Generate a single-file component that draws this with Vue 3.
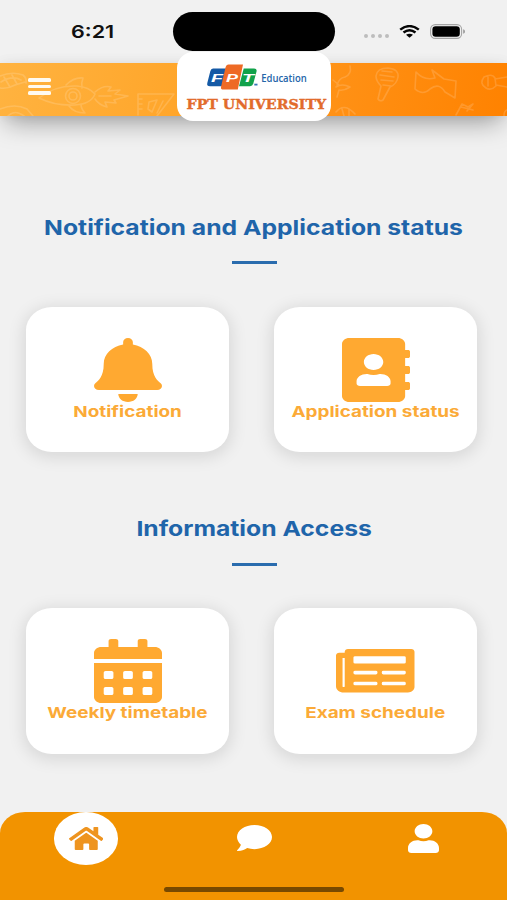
<script setup>
import { ref } from 'vue'

const activeTab = ref('home')

const icons = {
  bell: {
    box: '0 0 448 512',
    d: 'M224 512c35.32 0 63.97-28.65 63.97-64H160.03c0 35.35 28.65 64 63.97 64zm215.39-149.71c-19.32-20.76-55.47-51.99-55.47-154.29 0-77.7-54.48-139.9-127.94-155.16V32c0-17.67-14.32-32-31.98-32s-31.98 14.33-31.98 32v20.84C118.56 68.1 64.08 130.3 64.08 208c0 102.3-36.15 133.53-55.47 154.29-6 6.45-8.66 14.16-8.61 21.71.11 16.4 12.98 32 32.1 32h383.8c19.12 0 32-15.6 32.1-32 .05-7.55-2.61-15.27-8.61-21.71z'
  },
  book: {
    box: '0 0 448 512',
    d: 'M436 160c6.6 0 12-5.4 12-12v-40c0-6.6-5.4-12-12-12h-20V48c0-26.5-21.5-48-48-48H48C21.5 0 0 21.5 0 48v416c0 26.5 21.5 48 48 48h320c26.5 0 48-21.5 48-48v-48h20c6.6 0 12-5.4 12-12v-40c0-6.6-5.4-12-12-12h-20v-64h20c6.6 0 12-5.4 12-12v-40c0-6.6-5.4-12-12-12h-20v-64h20zm-228-32c35.3 0 64 28.7 64 64s-28.7 64-64 64-64-28.7-64-64 28.7-64 64-64zm112 236.8c0 10.6-10 19.2-22.4 19.2H118.4C106 384 96 375.4 96 364.8v-19.2c0-31.8 30.1-57.6 67.2-57.6h5c12.3 5.1 25.7 8 39.8 8s27.6-2.9 39.8-8h5c37.1 0 67.2 25.8 67.2 57.6v19.2z'
  },
  calendar: {
    box: '0 0 448 512',
    d: 'M0 464c0 26.5 21.5 48 48 48h352c26.5 0 48-21.5 48-48V192H0v272zM76 256h40q12 0 12 12v40q0 12-12 12H76q-12 0-12-12v-40q0-12 12-12zm128 0h40q12 0 12 12v40q0 12-12 12h-40q-12 0-12-12v-40q0-12 12-12zm128 0h40q12 0 12 12v40q0 12-12 12h-40q-12 0-12-12v-40q0-12 12-12zM76 384h40q12 0 12 12v40q0 12-12 12H76q-12 0-12-12v-40q0-12 12-12zm128 0h40q12 0 12 12v40q0 12-12 12h-40q-12 0-12-12v-40q0-12 12-12zm128 0h40q12 0 12 12v40q0 12-12 12h-40q-12 0-12-12v-40q0-12 12-12zM400 64h-48V16c0-8.8-7.2-16-16-16h-32c-8.8 0-16 7.2-16 16v48H160V16c0-8.8-7.2-16-16-16h-32c-8.8 0-16 7.2-16 16v48H48C21.5 64 0 85.5 0 112v48h448v-48c0-26.5-21.5-48-48-48z'
  },
  newspaper: {
    box: '0 64 576 384',
    d: 'M552 64H88c-13.255 0-24 10.745-24 24v8H24c-13.255 0-24 10.745-24 24v272c0 30.928 25.072 56 56 56h472c26.51 0 48-21.49 48-48V88c0-13.255-10.745-24-24-24zM56 400a8 8 0 0 1-8-8V144h16v248a8 8 0 0 1-8 8zm236-16H140q-12 0-12-12v-8q0-12 12-12h152q12 0 12 12v8q0 12-12 12zm208 0H348q-12 0-12-12v-8q0-12 12-12h152q12 0 12 12v8q0 12-12 12zm-208-96H140q-12 0-12-12v-8q0-12 12-12h152q12 0 12 12v8q0 12-12 12zm208 0H348q-12 0-12-12v-8q0-12 12-12h152q12 0 12 12v8q0 12-12 12zm0-96H140q-12 0-12-12v-40q0-12 12-12h360q12 0 12 12v40q0 12-12 12z'
  },
  home: {
    box: '0 32 576 448',
    d: 'M280.37 148.26L96 300.11V464a16 16 0 0 0 16 16l112.06-.29a16 16 0 0 0 15.92-16V368a16 16 0 0 1 16-16h64a16 16 0 0 1 16 16v95.64a16 16 0 0 0 16 16.05L464 480a16 16 0 0 0 16-16V300L295.67 148.26a12.19 12.19 0 0 0-15.3 0zM571.6 251.47L488 182.56V44.05a12 12 0 0 0-12-12h-56a12 12 0 0 0-12 12v72.61L318.47 43a48 48 0 0 0-61 0L4.34 251.47a12 12 0 0 0-1.6 16.91l25.5 31A12 12 0 0 0 45.15 301l235.22-193.74a12.19 12.19 0 0 1 15.3 0L530.9 301a12 12 0 0 0 16.9-1.6l25.5-31a12 12 0 0 0-1.7-16.93z'
  },
  chat: {
    box: '0 32 512 448',
    d: 'M256 32C114.6 32 0 125.1 0 240c0 49.6 21.4 95 57 130.7C44.5 421.1 2.7 466 2.2 466.5c-2.2 2.3-2.8 5.7-1.5 8.7S4.8 480 8 480c66.3 0 116-31.8 140.6-51.4 32.7 12.3 69 19.4 107.4 19.4 141.4 0 256-93.1 256-208S397.4 32 256 32z'
  },
  user: {
    box: '0 0 448 512',
    d: 'M224 256c70.7 0 128-57.3 128-128S294.7 0 224 0 96 57.3 96 128s57.3 128 128 128zm89.6 32h-16.7c-22.2 10.2-46.9 16-72.9 16s-50.6-5.8-72.9-16h-16.7C60.2 288 0 348.2 0 422.4V464c0 26.5 21.5 48 48 48h352c26.5 0 48-21.5 48-48v-41.6c0-74.2-60.2-134.4-134.4-134.4z'
  }
}

const sections = [
  {
    title: 'Notification and Application status',
    cards: [
      { icon: 'bell', label: 'Notification' },
      { icon: 'book', label: 'Application status' }
    ]
  },
  {
    title: 'Information Access',
    cards: [
      { icon: 'calendar', label: 'Weekly timetable' },
      { icon: 'newspaper', label: 'Exam schedule' }
    ]
  }
]

const tabs = ['home', 'chat', 'user']
</script>

<template>
  <div class="screen">
    <div class="status-bar">
      <span class="time">6:21</span>
      <div class="island"></div>
      <div class="status-icons">
        <span class="dots"><i v-for="n in 4" :key="n"></i></span>
        <svg class="wifi" viewBox="0 0 21 14" preserveAspectRatio="none">
          <path d="M1.2 4.9Q10.5-2.6 19.8 4.9M4.5 8.1Q10.5 3.2 16.5 8.1" fill="none" stroke="#050505" stroke-width="2.5" />
          <path d="M7 10.6Q10.5 8 14 10.6L10.5 13.8z" fill="#050505" />
        </svg>
        <svg class="battery" viewBox="0 0 36 15">
          <rect x=".6" y=".6" width="31" height="13.8" rx="4.6" fill="none" stroke="#a5a5a5" stroke-width="1.1" />
          <rect x="2.4" y="2.2" width="27.4" height="10.6" rx="3.2" fill="#000" />
          <path d="M33.2 5.2q1.8.6 1.8 2.3t-1.8 2.3z" fill="#999" />
        </svg>
      </div>
    </div>

    <header class="header">
      <!-- faint doodle pattern -->
      <svg class="doodles" viewBox="0 0 507 53" fill="none" stroke="#fff" stroke-width="1.6" stroke-linecap="round" stroke-linejoin="round">
        <path d="M0 13q12-5 23-1 4 3 3 8M1 19q11-7 20-2M0 25q8 1 15-3l10-3M4 14l6 10M12 12l5 9" />
        <path d="M0 46q15-6 27 0l6 7M8 53q7-7 16 0" />
        <path d="M39 35q16-13 38-12 12 1 18 8-4 10-20 11-20 1-36-7zM66 22q8-8 17-7-2 5-1 10M69 43q5 7 16 7-4-4-4-9" />
        <circle cx="73" cy="33" r="7.5" />
        <circle cx="73" cy="33" r="4" />
        <path d="M95 29q8-7 16-5l-3 4 12-1-5 4 13 2-14 4 2 3-11-1 2 5q-8-2-12-8M99 33h12" />
        <path d="M138 52V31h36l-17 22M138 36h4M138 41h4M138 46h4M149 39l8-2-5 12-4-3zM163 38l-6 12" />
        <path d="M336 24q6-4 14 0-6 4-11 3l-2 7M350 3q2 8-5 11-6 1-8 8M333 17l6 5" />
        <path d="M376 13q1-8 12-8 11 1 10 9-1 7-8 10l-7 13q-3 2-5-1l3-13q-5-5-5-10zM380 12l14 2M381 17l12 1M383 22l8 1M382 8l10 1" />
        <path d="M416 9q8 9 19 6l-3-8 12 9 12 2-1 17-10-6q-6-10-15-3-7 7-15 0z" />
        <path d="M484 14q8-4 11 1l1 8q-5 5-10 2-7-4-2-11zM495 16l12-2M496 22l11 2M488 14v9" />
        <path d="M336 49q8-10 19 2M342 46l2 7M349 46v7M456 52l6-11 6 3 5-3-6 7M461 44l12 3M504 53q0-5 3-6" />
      </svg>
      <button class="menu" aria-label="Menu">
        <span></span><span></span><span></span>
      </button>
      <div class="logo">
        <svg viewBox="0 0 154 69">
          <path d="M36 16.4h13.5l-4.6 17.8H33q-3.5 0-2.7-3.3l3-11.6q.7-2.9 2.7-2.9z" fill="#1459a5" />
          <path d="M51.5 12.4H66l-5.2 25.2H46.5q-3.2 0-2.4-3.2l4.4-18.8q.8-3.2 3-3.2z" fill="#ee6a25" />
          <path d="M66.7 16.4H77q3.3 0 2.5 3.2l-3.2 12q-.7 2.6-3.3 2.6H62z" fill="#11a24a" />
          <text x="34" y="29.5" class="tile" textLength="12" lengthAdjust="spacingAndGlyphs">F</text>
          <text x="49" y="29.5" class="tile" textLength="12" lengthAdjust="spacingAndGlyphs">P</text>
          <text x="65" y="29.5" class="tile" textLength="12" lengthAdjust="spacingAndGlyphs">T</text>
          <rect x="77.3" y="31.7" width="3.2" height="1.8" fill="#3775b4" />
          <text x="84.2" y="30" class="education" textLength="45.6" lengthAdjust="spacingAndGlyphs">Education</text>
          <text x="9.6" y="57" class="university" textLength="139.5" lengthAdjust="spacingAndGlyphs">FPT UNIVERSITY</text>
        </svg>
      </div>
    </header>

    <main class="content">
      <section v-for="section in sections" :key="section.title" class="section">
        <h2><span>{{ section.title }}</span></h2>
        <div class="rule"></div>
        <div class="cards">
          <a v-for="card in section.cards" :key="card.label" class="card">
            <span class="icon-box">
              <svg :class="['icon', card.icon]" :viewBox="icons[card.icon].box" preserveAspectRatio="none">
                <path :d="icons[card.icon].d" fill-rule="evenodd" />
              </svg>
            </span>
            <span class="label">{{ card.label }}</span>
          </a>
        </div>
      </section>
    </main>

    <nav class="tabs">
      <div class="tab-row">
        <button v-for="tab in tabs" :key="tab" class="tab" :class="{ active: tab === activeTab }" :aria-label="tab" @click="activeTab = tab">
          <svg :class="'tab-' + tab" :viewBox="icons[tab].box" preserveAspectRatio="none">
            <path :d="icons[tab].d" />
          </svg>
        </button>
      </div>
      <div class="home-indicator"></div>
    </nav>
  </div>
</template>

<style>
body {
  background: #f1f1f1;
}
</style>

<style scoped>
.screen {
  display: flex;
  flex-direction: column;
  width: 507px;
  height: 900px;
  overflow: hidden;
  background: #f1f1f1;
  font-family: Inter, "Liberation Sans", sans-serif;
}

button {
  border: 0;
  padding: 0;
  background: none;
}

.status-bar {
  display: grid;
  grid-template-columns: 173px 162px 1fr;
  height: 63px;
  flex: none;
  box-sizing: border-box;
  padding-top: 12px;
}

.time {
  justify-self: start;
  margin-left: 71px;
  font-size: 17.5px;
  line-height: 39px;
  font-weight: 600;
  color: #111;
  transform: scaleX(1.23);
  transform-origin: left;
}

.island {
  height: 39px;
  border-radius: 20px;
  background: #000;
}

.status-icons {
  display: flex;
  align-items: center;
  height: 39px;
  padding-left: 29px;
}

.dots {
  display: flex;
  gap: 2.8px;
  margin: 9px 9.5px 0 0;
}

.dots i {
  width: 4.2px;
  height: 4.2px;
  border-radius: 50%;
  background: #bdbdbd;
}

.wifi {
  width: 21px;
  height: 13px;
  margin-right: 10px;
}

.battery {
  width: 36px;
  height: 15px;
}

.header {
  position: relative;
  display: flex;
  align-items: center;
  height: 53px;
  flex: none;
  background: linear-gradient(100deg, #ffb340 0%, #ffa62b 35%, #ff9014 68%, #ff8200 100%);
  box-shadow: 0 12px 26px -6px rgba(0, 0, 0, 0.36), 0 0 12px rgba(0, 0, 0, 0.06);
}

.doodles {
  position: absolute;
  inset: 0;
  opacity: 0.15;
}

.menu {
  position: relative;
  display: flex;
  flex-direction: column;
  gap: 3.4px;
  width: 23px;
  margin: -6px 0 0 28px;
}

.menu span {
  height: 3.2px;
  border-radius: 1.5px;
  background: #fffaf0;
}

/* badge hangs over both edges of the bar */
.logo {
  position: absolute;
  left: 177px;
  top: -11px;
  width: 154px;
  height: 69px;
  border-radius: 16px;
  background: #fff;
}

.logo svg {
  display: block;
}

.tile {
  font: italic 700 11px "Liberation Sans", sans-serif;
  fill: #fff;
}

.education {
  font: 600 10.5px "Open Sans", sans-serif;
  fill: #2465a9;
}

.university {
  font: 700 13.4px "DejaVu Serif", serif;
  fill: #e26b2b;
  stroke: #e26b2b;
  stroke-width: 0.4px;
}

.content {
  flex: 1;
  display: flex;
  flex-direction: column;
  gap: 64px;
  padding: 98.5px 30px 0 26px;
}

.section {
  display: flex;
  flex-direction: column;
  align-items: center;
}

h2 {
  height: 26px;
  margin: 0 0 20.5px 5px;
  font-size: 20.6px;
  line-height: 26px;
  font-weight: 700;
  color: #1f65aa;
  white-space: nowrap;
}

h2 span {
  display: inline-block;
  transform: translateY(-0.5px) scaleX(1.2);
}

.rule {
  width: 45px;
  height: 3px;
  margin: 0 0 42.5px 5px;
  background: #2a6cae;
}

.cards {
  display: grid;
  grid-template-columns: 203px 203px;
  gap: 45px;
}

.card {
  display: flex;
  flex-direction: column;
  align-items: center;
  box-sizing: border-box;
  height: 145.5px;
  padding-top: 31px;
  border-radius: 26px / 23px;
  background: #fff;
  box-shadow: 0 3px 16px 3px rgba(0, 0, 0, 0.1);
}

.icon-box {
  display: flex;
  align-items: center;
  height: 64px;
}

.icon {
  width: 68px;
  height: 64px;
  fill: #ffa931;
}

.icon.newspaper {
  width: 78.5px;
  height: 43.5px;
}

.label {
  margin-top: 1px;
  font-size: 15.2px;
  line-height: 18px;
  font-weight: 700;
  color: #fbaa37;
  white-space: nowrap;
  transform: scaleX(1.245);
}

.tabs {
  height: 88.5px;
  flex: none;
  display: flex;
  flex-direction: column;
  align-items: center;
  border-radius: 25px 25px 0 0 / 21px 21px 0 0;
  background: #f29300;
}

.tab-row {
  display: grid;
  grid-template-columns: repeat(3, 169px);
  justify-items: center;
  height: 75px;
  padding-left: 2.5px;
}

.tab {
  display: flex;
  align-items: center;
  justify-content: center;
  width: 64.5px;
  height: 53px;
  border-radius: 50%;
}

.tab svg {
  fill: #fff;
}

.tab.active {
  background: #fff;
}

.tab.active svg {
  fill: #ee9420;
}

.tab-home {
  width: 34.5px;
  height: 23px;
}

.tab-chat {
  width: 35px;
  height: 26px;
}

.tab-user {
  width: 31px;
  height: 29px;
}

.home-indicator {
  width: 180px;
  height: 5px;
  border-radius: 3px;
  background: #784900;
}
</style>
